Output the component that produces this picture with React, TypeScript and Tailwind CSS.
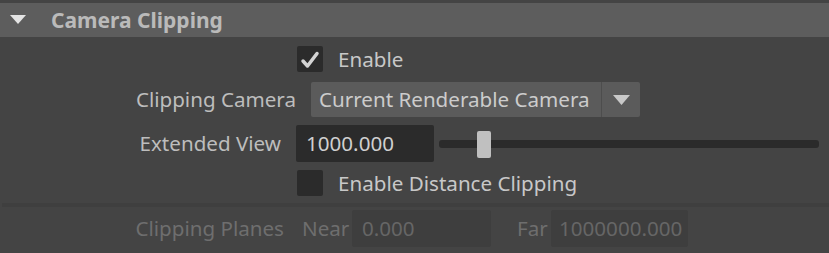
import React from 'react'

const font = { fontFamily: '"Noto Sans", "Open Sans", sans-serif' }

function CheckBox({ checked }: { checked?: boolean }) {
  return (
    <div className="w-[26px] h-[26px] rounded-[2px] bg-[#2b2b2b] flex items-center justify-center">
      {checked && (
        <svg width="26" height="26" viewBox="0 0 26 26">
          <polyline
            points="6,15 10.5,20 20,7.5"
            fill="none"
            stroke="#d4d4d4"
            strokeWidth="3.5"
            strokeLinecap="round"
            strokeLinejoin="round"
          />
        </svg>
      )}
    </div>
  )
}

export default function App() {
  return (
    <div className="w-[829px] h-[253px] bg-[#444444] overflow-hidden text-[20.6px] text-[#bdbdbd] leading-none" style={font}>
      <div className="h-[3px]" />
      {/* section header */}
      <div className="h-[34px] bg-[#5d5d5d] flex items-center">
        <svg width="16" height="10" viewBox="0 0 16 10" className="ml-[10px]">
          <polygon points="0,0 16,0 8,9" fill="#e4e4e4" />
        </svg>
        <span className="ml-[25px] font-bold text-[21px] text-[#bababa]">Camera Clipping</span>
      </div>

      {/* Enable */}
      <div className="mt-[9px] h-[26px] flex items-center">
        <div className="w-[297px]" />
        <CheckBox checked />
        <span className="ml-[15px] text-[#c8c8c8]">Enable</span>
      </div>

      {/* Clipping Camera */}
      <div className="mt-[10px] h-[35px] flex items-center">
        <div className="w-[296px] text-right">Clipping Camera</div>
        <div className="ml-[15px] w-[329px] h-[35px] bg-[#5b5b5b] rounded-[2px] flex items-center">
          <span className="flex-1 pl-[8px] text-[#cccccc]">Current Renderable Camera</span>
          <div className="w-[1px] h-full bg-[#4d4d4d]" />
          <div className="w-[38px] flex items-center justify-center">
            <svg width="17" height="10" viewBox="0 0 17 10">
              <polygon points="0,0 17,0 8.5,10" fill="#c8c8c8" />
            </svg>
          </div>
        </div>
      </div>

      {/* Extended View */}
      <div className="mt-[8px] h-[37px] flex items-center">
        <div className="w-[281px] text-right">Extended View</div>
        <div className="ml-[15px] w-[138px] h-[37px] bg-[#2b2b2b] rounded-[2px] flex items-center pl-[10px] text-[#d0d0d0]">
          1000.000
        </div>
        <div className="ml-[5px] w-[380px] h-[8px] bg-[#2b2b2b] rounded-[3px] relative">
          <div className="absolute left-[38px] top-[-9px] w-[14px] h-[27px] bg-[#c0c0c0] rounded-[2px]" />
        </div>
      </div>

      {/* Enable Distance Clipping */}
      <div className="mt-[8px] h-[26px] flex items-center">
        <div className="w-[297px]" />
        <CheckBox />
        <span className="ml-[15px] text-[#c8c8c8]">Enable Distance Clipping</span>
      </div>

      <div className="mt-[7px] ml-[2px] h-[4px] bg-[#3f3f3f]" />

      {/* Clipping Planes (disabled) */}
      <div className="mt-[3px] h-[37px] flex items-center text-[#6e6e6e]">
        <div className="w-[284px] text-right">Clipping Planes</div>
        <div className="ml-[18px] w-[46px]">Near</div>
        <div className="ml-[4px] w-[139px] h-[37px] bg-[#3e3e3e] rounded-[2px] flex items-center pl-[10px] text-[#666666]">
          0.000
        </div>
        <div className="ml-[26px] w-[28px]">Far</div>
        <div className="ml-[6px] w-[137px] h-[37px] bg-[#3e3e3e] rounded-[2px] flex items-center pl-[8px] text-[#666666]">
          1000000.000
        </div>
      </div>
    </div>
  )
}
